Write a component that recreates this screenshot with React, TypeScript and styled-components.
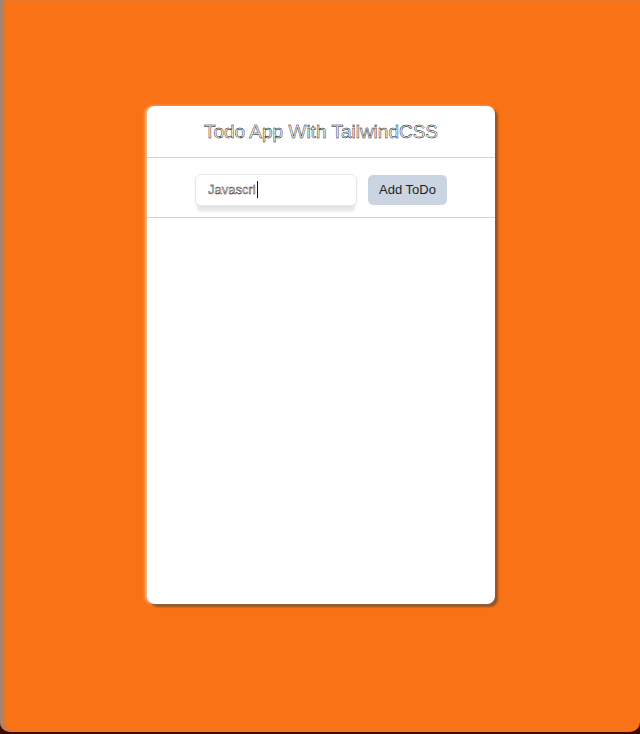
import React from "react";
import styled, { createGlobalStyle } from "styled-components";

const GlobalStyle = createGlobalStyle`
  html, body {
    margin: 0;
    padding: 0;
    background: #3b0a02;
  }
  body {
    font-family: "Liberation Sans", Arial, sans-serif;
  }
`;

const Frame = styled.div`
  width: 640px;
  height: 734px;
  background: #3b0a02;
`;

const Screen = styled.div`
  height: 732px;
  background: #f97316;
  border-bottom-left-radius: 10px;
  border-bottom-right-radius: 10px;
  box-shadow: inset 5px 0 4px -2px #8a8a8a;
  padding-top: 106px;
  box-sizing: border-box;
`;

const Card = styled.div`
  margin-left: 147px;
  width: 348px;
  height: 498px;
  background: #fff;
  border-radius: 8px;
  box-shadow: 3px 3px 2px rgba(60, 60, 60, 0.55), -2px 0 3px rgba(255, 240, 200, 0.6);
  display: flex;
  flex-direction: column;
`;

const Header = styled.div`
  height: 51px;
  display: flex;
  align-items: center;
  justify-content: center;
  border-bottom: 1px solid #d4d4d8;
`;

const Title = styled.h1`
  margin: 0;
  font-size: 19px;
  font-weight: 400;
  color: #fff;
  -webkit-text-stroke: 0.45px #000;
`;

const Form = styled.div`
  height: 60px;
  box-sizing: border-box;
  padding-top: 4px;
  display: flex;
  align-items: center;
  justify-content: center;
  gap: 11px;
  border-bottom: 1px solid #d4d4d8;
`;

const InputBox = styled.div`
  width: 162px;
  height: 32px;
  box-sizing: border-box;
  border: 1px solid #e5e7eb;
  border-radius: 6px;
  padding: 0 12px;
  display: flex;
  align-items: center;
  font-size: 13px;
  color: #fff;
  -webkit-text-stroke: 0.4px #000;
  box-shadow: 0 8px 2px -2px rgba(0, 0, 0, 0.08), 0 2px 3px rgba(0, 0, 0, 0.05);
`;

const Caret = styled.span`
  display: inline-block;
  width: 1.5px;
  height: 17px;
  background: #111;
  margin-left: 1px;
`;

const Button = styled.button`
  width: 79px;
  height: 30px;
  border: none;
  border-radius: 5px;
  background: #cbd5e1;
  color: #1e1e24;
  font-family: "Liberation Sans", Arial, sans-serif;
  font-size: 13px;
  padding: 0;
  cursor: pointer;
`;

const List = styled.div`
  flex: 1;
`;

export default function App() {
  return (
    <>
      <GlobalStyle />
      <Frame>
        <Screen>
          <Card>
            <Header>
              <Title>Todo App With TailwindCSS</Title>
            </Header>
            <Form>
              <InputBox>
                Javascri
                <Caret />
              </InputBox>
              <Button>Add ToDo</Button>
            </Form>
            <List />
          </Card>
        </Screen>
      </Frame>
    </>
  );
}
